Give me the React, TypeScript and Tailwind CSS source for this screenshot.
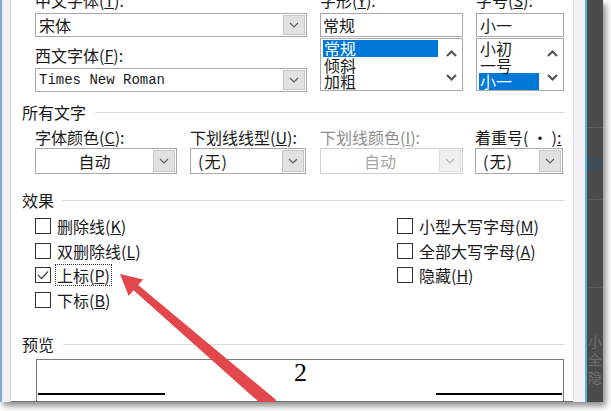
import React from 'react';

const Chevron = ({ color = '#5f5f5f' }: { color?: string }) => (
  <svg width="10" height="6" viewBox="0 0 10 6" fill="none">
    <path d="M1 1l4 4 4-4" stroke={color} strokeWidth="1.2" />
  </svg>
);

const ScrollUp = () => (
  <svg width="11" height="7" viewBox="0 0 11 7" fill="none">
    <path d="M1 6l4.5-4.5L10 6" stroke="#505050" strokeWidth="2" />
  </svg>
);

const ScrollDown = () => (
  <svg width="11" height="7" viewBox="0 0 11 7" fill="none">
    <path d="M1 1l4.5 4.5L10 1" stroke="#505050" strokeWidth="2" />
  </svg>
);

interface ComboProps {
  className?: string;
  children: React.ReactNode;
  disabled?: boolean;
  center?: boolean;
}

const Combo: React.FC<ComboProps> = ({ className = '', children, disabled = false, center = false }) => (
  <div className={`flex bg-white border ${disabled ? 'border-[#d0d0d0]' : 'border-[#a9a9a9]'} ${className}`}>
    <div
      className={`flex-1 flex items-center overflow-hidden whitespace-nowrap ${center ? 'justify-center' : 'pl-[3px]'} ${disabled ? 'text-[#a8a8a8]' : ''}`}
    >
      {children}
    </div>
    <div
      className={`w-[22px] my-[1px] mr-[1px] flex items-center justify-center border ${disabled ? 'bg-[#f0f0f0] border-[#dddddd]' : 'bg-[#e2e2e2] border-[#c6c6c6]'}`}
    >
      <Chevron color={disabled ? '#b8b8b8' : '#5f5f5f'} />
    </div>
  </div>
);

const ListBox = ({ items, selected }: { items: string[]; selected: number }) => (
  <div className="mt-[1px] h-[53px] border border-[#a9a9a9] bg-white flex">
    <div className="flex-1 pl-[2px] pr-[2px] pt-[1px]">
      {items.map((it, i) => (
        <div
          key={it}
          className={`h-[16.5px] leading-[16.5px] pl-[1px] ${i === selected ? 'bg-[#0078d7] text-white' : ''}`}
        >
          {it}
        </div>
      ))}
    </div>
    <div className="w-[22px] flex flex-col items-center justify-between pt-[11px] pb-[9px]">
      <ScrollUp />
      <ScrollDown />
    </div>
  </div>
);

const CheckBox = ({ checked = false }: { checked?: boolean }) => (
  <div className="w-[16px] h-[16px] border border-[#333333] bg-white flex items-center justify-center shrink-0">
    {checked && (
      <svg width="12" height="10" viewBox="0 0 12 10" fill="none">
        <path d="M1 5l3.5 3.5L11 1.5" stroke="#4a4a4a" strokeWidth="1.3" />
      </svg>
    )}
  </div>
);

const CheckRow = ({ label, checked, focus }: { label: React.ReactNode; checked?: boolean; focus?: boolean }) => (
  <div className="h-[24.5px] flex items-center">
    <CheckBox checked={checked} />
    <span
      className={`ml-[4px] leading-[20px] px-[1px] ${focus ? 'border border-dotted border-[#333333]' : 'border border-transparent'}`}
    >
      {label}
    </span>
  </div>
);

const GroupHead = ({ title, gap }: { title: string; gap: string }) => (
  <div className="flex items-center h-[20px] pl-[11px] pr-[8px]">
    <span className="leading-[20px]">{title}</span>
    <div className={`flex-1 h-[1px] bg-[#dcdcdc] ${gap}`} />
  </div>
);

export default function App() {
  return (
    <div className="w-[611px] h-[411px] bg-white relative overflow-hidden font-['Noto_Sans_CJK_SC','Noto_Sans',sans-serif] text-[16px] text-[#1a1a1a]">
      <div className="flex w-[603px] h-[402px] shadow-[3px_4px_6px_rgba(0,0,0,0.45)]">
        {/* left frame */}
        <div className="w-[2px] bg-[#7aaed8]" />
        <div className="w-[8px] bg-[#f2f2f2]" />
        <div className="w-[1px] bg-[#d6d6d6]" />

        {/* dialog content */}
        <div className="w-[562px] bg-white overflow-hidden flex flex-col border-b border-[#707070]">
          {/* font selection */}
          <div className="flex pl-[24px] -mt-[7px]">
            <div className="w-[272px] flex flex-col">
              <div className="h-[20px] leading-[15px]">中文字体(<u>T</u>):</div>
              <Combo className="h-[24px]">宋体</Combo>
              <div className="mt-[8px] h-[20px] leading-[20px]">西文字体(<u>F</u>):</div>
              <Combo className="mt-[3px] h-[24px]">
                <span className="font-['Liberation_Mono',monospace] text-[14px]">Times New Roman</span>
              </Combo>
            </div>
            <div className="w-[143px] ml-[13px] flex flex-col">
              <div className="h-[20px] leading-[15px]">字形(<u>Y</u>):</div>
              <div className="h-[24px] border border-[#a9a9a9] flex items-center pl-[2px]">常规</div>
              <ListBox items={['常规', '倾斜', '加粗']} selected={0} />
            </div>
            <div className="w-[88px] ml-[13px] flex flex-col">
              <div className="h-[20px] leading-[15px]">字号(<u>S</u>):</div>
              <div className="h-[24px] border border-[#a9a9a9] flex items-center pl-[3px]">小一</div>
              <ListBox items={['小初', '一号', '小一']} selected={2} />
            </div>
          </div>

          {/* all text */}
          <div className="mt-[10px]">
            <GroupHead title="所有文字" gap="ml-[9px]" />
          </div>
          <div className="flex pl-[24px] mt-[5px]">
            <div className="w-[142px] flex flex-col">
              <div className="h-[20px] leading-[20px] whitespace-nowrap">字体颜色(<u>C</u>):</div>
              <Combo className="mt-[1px] h-[26px]" center>自动</Combo>
            </div>
            <div className="w-[116px] ml-[13px] flex flex-col">
              <div className="h-[20px] leading-[20px] whitespace-nowrap">下划线线型(<u>U</u>):</div>
              <Combo className="mt-[1px] h-[26px]">
                <span className="pl-[4px] tracking-[1px]">(无)</span>
              </Combo>
            </div>
            <div className="w-[143px] ml-[14px] flex flex-col">
              <div className="h-[20px] leading-[20px] whitespace-nowrap text-[#8f8f8f]">下划线颜色(<u>I</u>):</div>
              <Combo className="mt-[1px] h-[26px]" center disabled>自动</Combo>
            </div>
            <div className="w-[88px] ml-[12px] flex flex-col">
              <div className="h-[20px] leading-[20px] whitespace-nowrap">
                着重号( · )<u>:</u>
              </div>
              <Combo className="mt-[1px] h-[26px]">
                <span className="pl-[4px] tracking-[1px]">(无)</span>
              </Combo>
            </div>
          </div>

          {/* effects */}
          <div className="mt-[16px]">
            <GroupHead title="效果" gap="ml-[8px]" />
          </div>
          <div className="flex mt-[4px] pl-[24px]">
            <div className="w-[362px] flex flex-col">
              <CheckRow label={<>删除线(<u>K</u>)</>} />
              <CheckRow label={<>双删除线(<u>L</u>)</>} />
              <CheckRow label={<>上标(<u>P</u>)</>} checked focus />
              <CheckRow label={<>下标(<u>B</u>)</>} />
            </div>
            <div className="flex flex-col">
              <CheckRow label={<>小型大写字母(<u>M</u>)</>} />
              <CheckRow label={<>全部大写字母(<u>A</u>)</>} />
              <CheckRow label={<>隐藏(<u>H</u>)</>} />
            </div>
          </div>

          {/* preview */}
          <div className="mt-[22px]">
            <GroupHead title="预览" gap="ml-[9px]" />
          </div>
          <div className="mt-[5px] ml-[25px] w-[528px] h-[60px] shrink-0 border border-[#7a7a7a] flex items-start px-[1px]">
            <div className="w-[127px] h-[1.5px] mt-[33px] bg-black" />
            <div className="flex-1 text-center font-['Liberation_Serif',serif] text-[26px] leading-[26px] text-black">
              2
            </div>
            <div className="w-[126px] h-[1.5px] mt-[33px] bg-black" />
          </div>
        </div>

        {/* right frame and the window behind */}
        <div className="w-[12px] bg-[#f3f1f5] border-l border-[#e2e2e2]" />
        <div className="w-[2px] bg-[#58b4dc]" />
        <div className="w-[16px] bg-[#4b4b4b] flex flex-col overflow-hidden">
          <div className="h-[128px] border-b border-[#5c5c5c]" />
          <div className="h-[30px]" />
          <div className="h-[12px] bg-[#3f4e5b]" />
          <div className="h-[30px] border-b border-[#5a5a5a]" />
          <div className="h-[88px] border-b border-[#5a5a5a]" />
          <div className="flex flex-col items-center text-[14px] leading-[18px] text-[#6e6e6e] pt-[44px]">
            <span>小</span>
            <span>全</span>
            <span>隐</span>
          </div>
        </div>
      </div>

      {/* annotation arrow */}
      <svg className="absolute left-0 top-0 pointer-events-none" width="611" height="402" viewBox="0 0 611 402">
        <polygon
          points="120,274 143.1,279.4 138.2,285 276.2,400.1 267.8,409.9 133.6,290.3 128.7,296"
          fill="#e2474c"
        />
      </svg>
    </div>
  );
}
